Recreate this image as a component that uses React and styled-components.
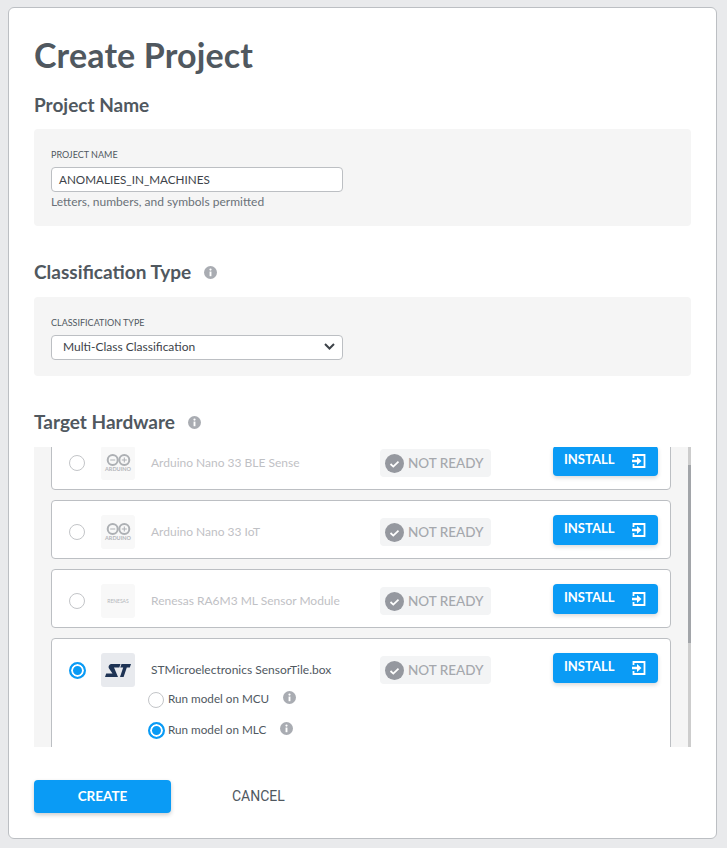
import styled, { createGlobalStyle } from "styled-components";

const GlobalStyle = createGlobalStyle`
  body {
    margin: 0;
    background: #e9eaec;
    font-family: Lato, "Open Sans", sans-serif;
    color: #50585f;
  }
`;

const Page = styled.div`
  height: 848px;
  padding: 7px 10px 9px 8px;
  box-sizing: border-box;
  overflow: hidden;
`;

const Modal = styled.div`
  height: 832px;
  box-sizing: border-box;
  background: #fff;
  border: 1px solid #bcbfc3;
  border-radius: 6px;
  padding: 0 25px;
`;

const Title = styled.h1`
  margin: 0;
  padding-top: 27px;
  font-size: 34px;
  line-height: 40px;
  font-weight: 700;
  letter-spacing: 0.15px;
`;

const Heading = styled.h2`
  display: flex;
  align-items: center;
  gap: 13px;
  margin: ${(p) => p.$top}px 0 0;
  height: 24px;
  font-size: 19px;
  line-height: 24px;
  font-weight: 700;
`;

const Panel = styled.div`
  margin-top: ${(p) => p.$top}px;
  height: ${(p) => p.$height}px;
  box-sizing: border-box;
  padding: 20px 17px 0;
  background: #f5f5f5;
  border-radius: 4px;
`;

const Label = styled.div`
  font-size: 9px;
  line-height: 11px;
  margin-bottom: 7px;
  color: #50585f;
  text-transform: uppercase;
`;

const Field = styled.div`
  width: 292px;
  height: 25px;
  box-sizing: border-box;
  display: flex;
  align-items: center;
  justify-content: space-between;
  padding: 0 7px 2px ${(p) => p.$left}px;
  background: #fff;
  border: 1px solid #bcbfc3;
  border-radius: 4px;
  font-size: ${(p) => p.$size}px;
  color: #3d4349;
`;

const Helper = styled.div`
  margin-top: 2px;
  font-size: 12px;
  line-height: 15px;
  color: #6a7178;
`;

const ScrollArea = styled.div`
  position: relative;
  margin-top: 13px;
  height: 300px;
  background: #f5f5f5;
  overflow: hidden;
  padding: 0 20px 0 17px;
`;

const ScrollThumb = styled.div`
  position: absolute;
  top: 0;
  right: 0;
  bottom: 0;
  width: 3px;
  background: linear-gradient(
    #cdcdcd 18px,
    #a2a5a9 18px,
    #a2a5a9 196px,
    #cdcdcd 196px
  );
`;

const HardwareList = styled.div`
  display: flex;
  flex-direction: column;
  gap: 10px;
  margin-top: -16px;
`;

const HardwareCard = styled.div`
  box-sizing: border-box;
  height: ${(p) => (p.$open ? 150 : 59)}px;
  background: #fff;
  border: 1px solid #bcbfc3;
  border-radius: 4px;
  padding: 14px 12px 0 17px;
`;

const HardwareRow = styled.div`
  display: flex;
  align-items: center;
  height: 34px;
`;

const Radio = styled.span`
  flex: none;
  width: ${(p) => (p.$on ? 17 : 16)}px;
  height: ${(p) => (p.$on ? 17 : 16)}px;
  margin-right: ${(p) => (p.$on ? -1 : 0)}px;
  box-sizing: border-box;
  border-radius: 50%;
  background: ${(p) => (p.$on ? "#0a9bf5" : "#fff")};
  border: ${(p) => (p.$on ? "2px solid #0a9bf5" : "1px solid #c3c5c8")};
  box-shadow: ${(p) => (p.$on ? "inset 0 0 0 2px #fff" : "none")};
`;

const LogoBox = styled.div`
  flex: none;
  width: 34px;
  height: 34px;
  margin: 0 16px;
  display: flex;
  flex-direction: column;
  align-items: center;
  justify-content: center;
  border-radius: 3px;
  background: ${(p) => (p.$dim ? "#f8f8f8" : "#e8eaee")};
  color: #adb0b4;
`;

const LogoText = styled.span`
  margin-top: 1px;
  font-size: ${(p) => p.$size}px;
  line-height: 5px;
  font-weight: ${(p) => p.$weight};
  color: #b4b6ba;
`;

const HardwareName = styled.div`
  flex: none;
  width: 229px;
  margin-top: -2px;
  font-size: 12px;
  color: ${(p) => (p.$dim ? "#bfc1c5" : "#50585f")};
`;

const Badge = styled.div`
  flex: none;
  display: flex;
  align-items: center;
  gap: 4px;
  width: 111px;
  height: 28px;
  box-sizing: border-box;
  padding-left: 5px;
  border-radius: 4px;
  background: #f3f4f5;
  font-size: 13.5px;
  font-weight: 500;
  color: #a5a8ad;
`;

const InstallButton = styled.button`
  flex: none;
  align-self: flex-start;
  display: flex;
  align-items: center;
  justify-content: space-between;
  width: 105px;
  height: 30px;
  margin: 0 0 0 62px;
  padding: 0 12px 0 11px;
  border: none;
  border-radius: 4px;
  background: #0a9bf5;
  box-shadow: 0 2px 4px rgba(0, 0, 0, 0.15);
  color: #fff;
  font-family: inherit;
  font-size: 13px;
  font-weight: 700;
`;

const InstallLabel = styled.span`
  margin-top: -4px;
`;

const SubOptions = styled.div`
  display: flex;
  flex-direction: column;
  padding-left: 79px;
  margin-top: -3px;
`;

const SubOption = styled.div`
  display: flex;
  align-items: center;
  height: 31px;
  gap: 4px;
  font-size: 11.7px;
  color: #50585f;

  svg {
    margin-top: -4px;
  }
`;

const SubLabel = styled.span`
  margin-right: 10px;
  margin-top: -3px;
`;

const Footer = styled.div`
  display: flex;
  align-items: center;
  margin-top: 33px;
`;

const CreateButton = styled.button`
  width: 137px;
  height: 33px;
  padding: 0 0 2px;
  border: none;
  border-radius: 4px;
  background: #0a9bf5;
  box-shadow: 0 2px 4px rgba(0, 0, 0, 0.2);
  color: #fff;
  font-family: inherit;
  font-size: 13.5px;
  font-weight: 700;
`;

const CancelButton = styled.button`
  margin-left: 61px;
  padding: 0 0 2px;
  border: none;
  background: none;
  color: #50585f;
  font-family: Roboto, sans-serif;
  font-size: 14px;
`;

function InfoIcon({ size = 13 }) {
  return (
    <svg width={size} height={size} viewBox="0 0 14 14" style={{ flex: "none" }}>
      <circle cx="7" cy="7" r="7" fill="#a9acb2" />
      <circle cx="7" cy="3.9" r="1.2" fill="#fff" />
      <rect x="6" y="6" width="2" height="5" fill="#fff" />
    </svg>
  );
}

function CheckIcon() {
  return (
    <svg width="19" height="19" viewBox="0 0 19 19" style={{ flex: "none" }}>
      <circle cx="9.5" cy="9.5" r="9.5" fill="#95989f" />
      <path d="M5.5 10l2.8 2.6 5.2-5" fill="none" stroke="#fff" strokeWidth="1.8" />
    </svg>
  );
}

function EnterIcon() {
  return (
    <svg width="14" height="14" viewBox="0 0 14 14" style={{ marginTop: -1 }}>
      <path d="M1.5 4V1h11v12h-11v-3" fill="none" stroke="#fff" strokeWidth="1.8" />
      <path d="M0 5.8h5V3l4.5 4L5 11V8.200H0z" fill="#fff" />
    </svg>
  );
}

function ArduinoLogo() {
  return (
    <>
      <svg width="25" height="12" viewBox="0 0 25 12">
        <g fill="none" stroke="currentColor" strokeWidth="2">
          <circle cx="6.7" cy="6" r="5" />
          <circle cx="18.3" cy="6" r="5" />
        </g>
        <path d="M4.2 6h5M15.8 6h5M18.3 3.500v5" stroke="currentColor" strokeWidth="1" />
      </svg>
      <LogoText $size={5.5} $weight={700}>ARDUINO</LogoText>
    </>
  );
}

function StLogo() {
  return (
    <svg width="26" height="13" viewBox="0 0 26 13" fill="#1e3354">
      <path d="M6 0H15.500L14.300 3.500H9L13 13H0L1.200 9.500H7.500L3.700 4Q3.400 2.500 4 1.600Q4.800 0 6 0Z" />
      <path d="M16.500 0H26L24.800 3.500H21.800L18.600 13H15L18.200 3.500H15.300Z" />
    </svg>
  );
}

const hardware = [
  { name: "Arduino Nano 33 BLE Sense", logo: <ArduinoLogo /> },
  { name: "Arduino Nano 33 IoT", logo: <ArduinoLogo /> },
  {
    name: "Renesas RA6M3 ML Sensor Module",
    logo: <LogoText $size={5} $weight={400}>RENESAS</LogoText>,
  },
];

function HardwareItem({ name, logo, dim = true, on = false }) {
  return (
    <HardwareRow>
      <Radio $on={on} />
      <LogoBox $dim={dim}>{logo}</LogoBox>
      <HardwareName $dim={dim}>{name}</HardwareName>
      <Badge>
        <CheckIcon />
        NOT READY
      </Badge>
      <InstallButton>
        <InstallLabel>INSTALL</InstallLabel>
        <EnterIcon />
      </InstallButton>
    </HardwareRow>
  );
}

export default function App() {
  return (
    <Page>
      <GlobalStyle />
      <Modal>
        <Title>Create Project</Title>
        <Heading $top={18}>Project Name</Heading>
        <Panel $top={12} $height={97}>
          <Label>Project Name</Label>
          <Field $left={7} $size={11.7}>ANOMALIES_IN_MACHINES</Field>
          <Helper>Letters, numbers, and symbols permitted</Helper>
        </Panel>
        <Heading $top={34}>
          Classification Type <InfoIcon />
        </Heading>
        <Panel $top={13} $height={79}>
          <Label>Classification Type</Label>
          <Field $left={11} $size={12}>
            Multi-Class Classification
            <svg width="11" height="7" viewBox="0 0 11 7">
              <path d="M1 1l4.500 4.500L10 1" fill="none" stroke="#3d4349" strokeWidth="2" />
            </svg>
          </Field>
        </Panel>
        <Heading $top={34}>
          Target Hardware <InfoIcon />
        </Heading>
        <ScrollArea>
          <HardwareList>
            {hardware.map((item) => (
              <HardwareCard key={item.name}>
                <HardwareItem name={item.name} logo={item.logo} />
              </HardwareCard>
            ))}
            <HardwareCard $open>
              <HardwareItem
                name="STMicroelectronics SensorTile.box"
                logo={<StLogo />}
                dim={false}
                on
              />
              <SubOptions>
                <SubOption>
                  <Radio />
                  <SubLabel>Run model on MCU</SubLabel>
                  <InfoIcon />
                </SubOption>
                <SubOption>
                  <Radio $on />
                  <SubLabel>Run model on MLC</SubLabel>
                  <InfoIcon />
                </SubOption>
              </SubOptions>
            </HardwareCard>
          </HardwareList>
          <ScrollThumb />
        </ScrollArea>
        <Footer>
          <CreateButton>CREATE</CreateButton>
          <CancelButton>CANCEL</CancelButton>
        </Footer>
      </Modal>
    </Page>
  );
}
